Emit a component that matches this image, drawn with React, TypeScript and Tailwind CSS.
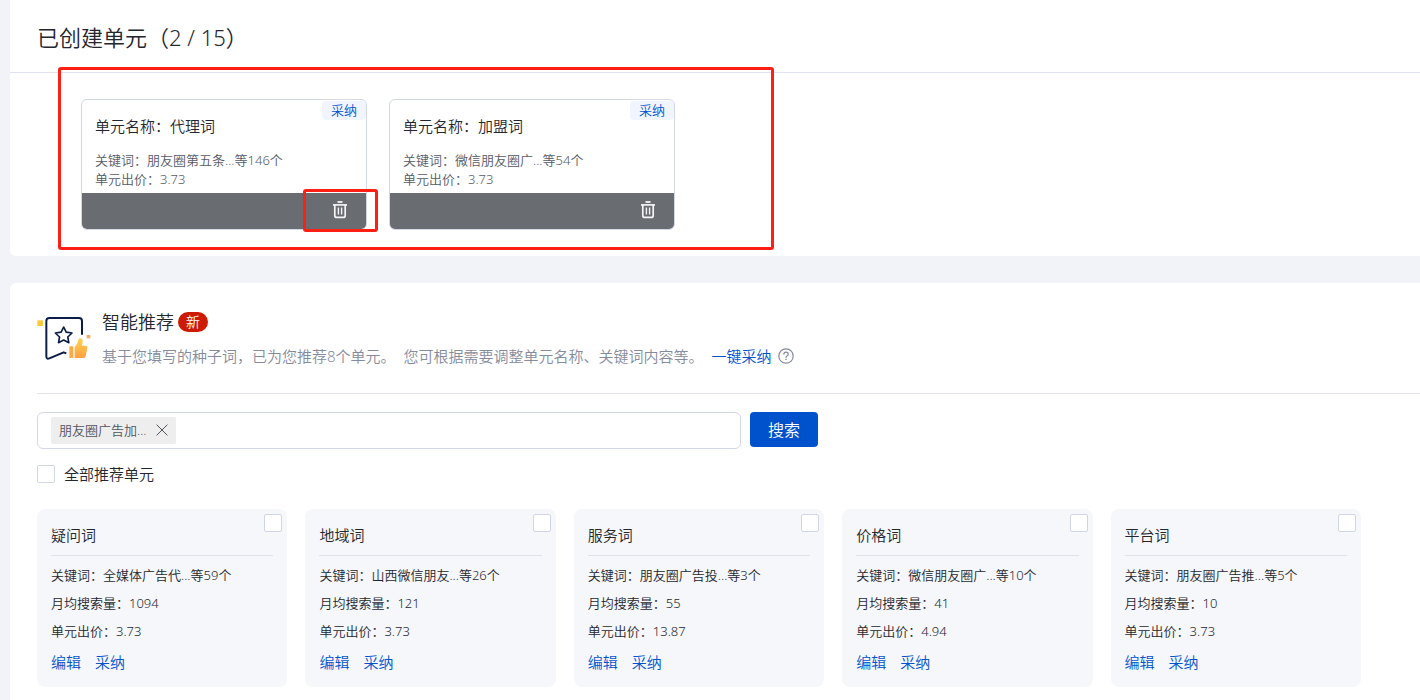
import { useState } from "react";

type CreatedUnit = { name: string; keywords: string; price: string; highlighted?: boolean };
type SuggestedUnit = { name: string; keywords: string; volume: string; price: string };

const createdUnits: CreatedUnit[] = [
  { name: "代理词", keywords: "朋友圈第五条...等146个", price: "3.73", highlighted: true },
  { name: "加盟词", keywords: "微信朋友圈广...等54个", price: "3.73" },
];

const suggestedUnits: SuggestedUnit[] = [
  { name: "疑问词", keywords: "全媒体广告代...等59个", volume: "1094", price: "3.73" },
  { name: "地域词", keywords: "山西微信朋友...等26个", volume: "121", price: "3.73" },
  { name: "服务词", keywords: "朋友圈广告投...等3个", volume: "55", price: "13.87" },
  { name: "价格词", keywords: "微信朋友圈广...等10个", volume: "41", price: "4.94" },
  { name: "平台词", keywords: "朋友圈广告推...等5个", volume: "10", price: "3.73" },
];

const checkboxClass =
  "block size-[18px] shrink-0 appearance-none rounded-xs border border-[#d0d6e8] bg-white checked:border-[#0052cc] checked:bg-[#0052cc]";

function TrashIcon() {
  return (
    <svg viewBox="0 0 16 18" className="h-[18px] w-4" fill="none" stroke="#f4f4f5" aria-hidden="true">
      <path d="M5.5 1h5" strokeWidth="1.8" />
      <path d="M1 3.9h14" strokeWidth="1.7" />
      <path d="M2.8 4v10.4q0 2 2 2h6.4q2 0 2-2V4" strokeWidth="1.7" />
      <path d="M6.4 6.6v6.8M9.6 6.6v6.8" strokeWidth="1.4" />
    </svg>
  );
}

function RecommendIcon() {
  return (
    <svg viewBox="50 45 162 138" className="h-[46px] w-[54px]" fill="none" aria-hidden="true">
      <defs>
        <linearGradient id="thumb" x1="0" y1="0" x2="0" y2="1">
          <stop offset="0" stopColor="#ffd24a" />
          <stop offset="1" stopColor="#ff9f45" />
        </linearGradient>
      </defs>
      <rect x="51" y="61" width="17" height="17" fill="#ffc83d" />
      <rect x="199" y="105" width="11" height="10" fill="#ffa75a" />
      <path
        d="M185 104V63q0-9-9-9H87q-9 0-9 9v106q0 10 9 6l43-18 8 3"
        stroke="#0b1c46"
        strokeWidth="6"
        strokeLinejoin="round"
      />
      <path
        d="M130 81l7.6 15.6 17.4 2.4-12.6 12 3 17L130 120l-15.4 8 3-17L105 99l17.4-2.4z"
        stroke="#0b1c46"
        strokeWidth="5"
        strokeLinejoin="round"
      />
      <rect x="147" y="139" width="12" height="35" rx="1.5" fill="#ffaa48" />
      <path
        d="M163 174v-32q9-9 12-25 1-3 5-2 8 2 7 11l-2 11h11q6 0 5 6l-5 26q-1 5-6 5z"
        fill="url(#thumb)"
      />
    </svg>
  );
}

function HelpIcon() {
  return (
    <svg viewBox="0 0 16 16" className="size-4" fill="none" stroke="#858b9c" aria-hidden="true">
      <circle cx="8" cy="8" r="7.2" strokeWidth="1.2" />
      <path d="M5.8 6.4q0-2.2 2.2-2.2t2.2 2q0 1.1-1.2 1.8-1 .6-1 1.7" strokeWidth="1.3" />
      <path d="M8 10.7v1.4" strokeWidth="1.4" />
    </svg>
  );
}

function CreatedCard({ unit }: { unit: CreatedUnit }) {
  return (
    <li className="relative flex w-[286px] flex-col rounded-md border border-[#d3d8e6]">
      <span className="absolute top-px right-0 rounded-sm bg-[#f0f5ff] px-[9px] text-[13px] leading-[19px] text-[#0052cc]">
        采纳
      </span>
      <h2 className="px-[13px] pt-[15px] text-[15px] leading-[22px] text-[#24262e]">单元名称：{unit.name}</h2>
      <div className="px-[13px] pt-[14px] pb-1 text-[13px] leading-[19px] text-[#555a66]">
        <p>关键词：{unit.keywords}</p>
        <p>单元出价：{unit.price}</p>
      </div>
      <div className="flex h-9 justify-end rounded-b-[5px] bg-[#696c71] pr-[18px]">
        <button type="button" aria-label={`删除${unit.name}`} className="relative flex h-[34px] items-center">
          <TrashIcon />
          {unit.highlighted && (
            <span className="pointer-events-none absolute -top-1 -right-[30px] h-[43px] w-[75px] rounded-[3px] border-3 border-[#ff1f14]" />
          )}
        </button>
      </div>
    </li>
  );
}

function SuggestedCard({ unit }: { unit: SuggestedUnit }) {
  return (
    <li className="relative rounded-lg bg-[#f6f7fb] px-3.5 pt-3.5 pb-[11px] text-[13px] leading-7 text-[#24262e]">
      <input type="checkbox" aria-label={`选择${unit.name}`} className={`${checkboxClass} absolute top-[5px] right-[5px]`} />
      <h3 className="border-b border-[#e0e2e9] pb-2 text-[15px] leading-6">{unit.name}</h3>
      <div className="pt-[5px]">
        <p>关键词：{unit.keywords}</p>
        <p>月均搜索量：{unit.volume}</p>
        <p>单元出价：{unit.price}</p>
      </div>
      <div className="flex gap-3.5 pt-[3px] text-[15px] leading-7 text-[#0052cc]">
        <button type="button">编辑</button>
        <button type="button">采纳</button>
      </div>
    </li>
  );
}

export default function App() {
  const [tags, setTags] = useState(["朋友圈广告加..."]);

  return (
    <main className="flex min-h-screen flex-col gap-[27px] bg-[#f2f3f8] pl-2.5 font-[Noto_Sans,Noto_Sans_CJK_SC,sans-serif] font-[350]">
      <section className="rounded-bl-md bg-white pb-[26px]">
        <h1 className="border-b border-[#e1e4f0] px-[27px] pt-[21px] pb-[19px] text-[22px] leading-8 text-[#24262e]">
          已创建单元（2 / 15）
        </h1>
        <div className="flex pt-[26px] pl-[71px]">
          <ul className="relative flex gap-[22px]">
            {createdUnits.map((unit) => (
              <CreatedCard key={unit.name} unit={unit} />
            ))}
            <li
              aria-hidden="true"
              className="pointer-events-none absolute -top-8 -right-[99px] -bottom-5 -left-[23px] rounded-[3px] border-3 border-[#ff1f14]"
            />
          </ul>
        </div>
      </section>

      <section className="flex-1 rounded-tl-md bg-white pb-3.5 pl-[27px]">
        <header className="flex gap-[11px] border-b border-[#e1e4f0] pt-[27px] pb-[25px]">
          <div className="pt-[5px]">
            <RecommendIcon />
          </div>
          <div>
            <div className="flex items-center gap-1">
              <h2 className="text-[18px] leading-6 text-[#24262e]">智能推荐</h2>
              <span className="rounded-full bg-[#cc1b00] px-2 text-[14px] leading-5 text-white">新</span>
            </div>
            <div className="flex items-center gap-2 pt-2.5 text-[15px] leading-6 text-[#858b9c]">
              <p className="flex gap-2">
                <span>基于您填写的种子词，已为您推荐8个单元。</span>
                <span>您可根据需要调整单元名称、关键词内容等。</span>
              </p>
              <span className="flex items-center gap-1.5">
                <button type="button" className="text-[#0052cc]">
                  一键采纳
                </button>
                <HelpIcon />
              </span>
            </div>
          </div>
        </header>

        <form className="flex items-start gap-[9px] pt-[18px]" onSubmit={(event) => event.preventDefault()}>
          <div className="flex h-[37px] w-[704px] items-center rounded-md border border-[#d3d8e6] px-[13px]">
            {tags.map((tag) => (
              <span
                key={tag}
                className="flex h-[27px] items-center gap-[9px] rounded-xs bg-[#eeeeee] px-2 pb-0.5 text-[13px] leading-5 text-[#50545e]"
              >
                {tag}
                <button type="button" aria-label={`移除${tag}`} onClick={() => setTags([])}>
                  <svg viewBox="0 0 12 12" className="size-3" fill="none" stroke="#50545e" aria-hidden="true">
                    <path d="M.6.6l10.8 10.8M11.4.6L.6 11.4" strokeWidth="1" />
                  </svg>
                </button>
              </span>
            ))}
            <input type="text" aria-label="种子词" className="min-w-0 flex-1 px-2 text-[13px] outline-none" />
          </div>
          <button type="submit" className="h-[35px] rounded-sm bg-[#0052cc] px-[18px] text-[16px] leading-6 text-white">
            搜索
          </button>
        </form>

        <label className="flex w-fit items-center gap-[9px] pt-[13px] text-[15px] leading-6 text-[#24262e]">
          <input type="checkbox" className={checkboxClass} />
          全部推荐单元
        </label>

        <ul className="grid grid-cols-5 gap-[18px] pt-[23px] pr-[59px]">
          {suggestedUnits.map((unit) => (
            <SuggestedCard key={unit.name} unit={unit} />
          ))}
        </ul>
      </section>
    </main>
  );
}
